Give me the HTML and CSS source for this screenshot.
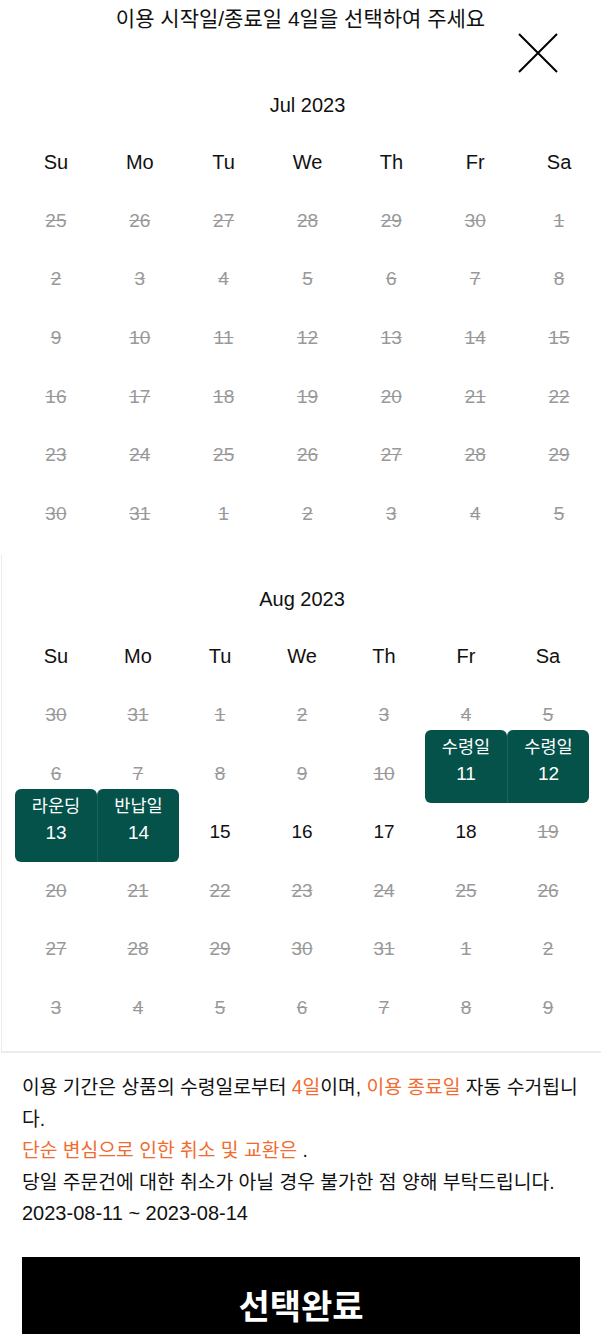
FILE: index.html
```html
<!DOCTYPE html>
<html lang="ko">
<head>
    <meta charset="UTF-8">
    <meta name="viewport" content="width=device-width, initial-scale=1.0">
    <title>이용 기간 선택</title>
    <link rel="stylesheet" href="styles.css">
</head>
<body>
    <div class="header">
        <h1>이용 시작일/종료일 4일을 선택하여 주세요</h1>
        <button class="close" type="button" aria-label="닫기">
            <svg width="40" height="40" viewBox="0 0 40 40">
                <path d="M1 1 L39 39 M39 1 L1 39" stroke="#000" stroke-width="2" fill="none"/>
            </svg>
        </button>
    </div>

    <!-- July -->
    <div class="month jul">
        <div class="month-title">Jul 2023</div>
        <div class="grid">
            <div class="wd">Su</div><div class="wd">Mo</div><div class="wd">Tu</div><div class="wd">We</div><div class="wd">Th</div><div class="wd">Fr</div><div class="wd">Sa</div>

            <div class="day off">25</div><div class="day off">26</div><div class="day off">27</div><div class="day off">28</div><div class="day off">29</div><div class="day off">30</div><div class="day off">1</div>
            <div class="day off">2</div><div class="day off">3</div><div class="day off">4</div><div class="day off">5</div><div class="day off">6</div><div class="day off">7</div><div class="day off">8</div>
            <div class="day off">9</div><div class="day off">10</div><div class="day off">11</div><div class="day off">12</div><div class="day off">13</div><div class="day off">14</div><div class="day off">15</div>
            <div class="day off">16</div><div class="day off">17</div><div class="day off">18</div><div class="day off">19</div><div class="day off">20</div><div class="day off">21</div><div class="day off">22</div>
            <div class="day off">23</div><div class="day off">24</div><div class="day off">25</div><div class="day off">26</div><div class="day off">27</div><div class="day off">28</div><div class="day off">29</div>
            <div class="day off">30</div><div class="day off">31</div><div class="day off">1</div><div class="day off">2</div><div class="day off">3</div><div class="day off">4</div><div class="day off">5</div>
        </div>
    </div>

    <!-- August -->
    <div class="month aug">
        <div class="month-title">Aug 2023</div>
        <div class="grid">
            <div class="wd">Su</div><div class="wd">Mo</div><div class="wd">Tu</div><div class="wd">We</div><div class="wd">Th</div><div class="wd">Fr</div><div class="wd">Sa</div>

            <div class="day off">30</div><div class="day off">31</div><div class="day off">1</div><div class="day off">2</div><div class="day off">3</div><div class="day off">4</div><div class="day off">5</div>
            <div class="day off">6</div><div class="day off">7</div><div class="day off">8</div><div class="day off">9</div><div class="day off">10</div>
            <div class="day sel start"><span class="tag">수령일</span><span class="num">11</span></div>
            <div class="day sel end"><span class="tag">수령일</span><span class="num">12</span></div>
            <div class="day sel start"><span class="tag">라운딩</span><span class="num">13</span></div>
            <div class="day sel end"><span class="tag">반납일</span><span class="num">14</span></div>
            <div class="day">15</div><div class="day">16</div><div class="day">17</div><div class="day">18</div><div class="day off">19</div>
            <div class="day off">20</div><div class="day off">21</div><div class="day off">22</div><div class="day off">23</div><div class="day off">24</div><div class="day off">25</div><div class="day off">26</div>
            <div class="day off">27</div><div class="day off">28</div><div class="day off">29</div><div class="day off">30</div><div class="day off">31</div><div class="day off">1</div><div class="day off">2</div>
            <div class="day off">3</div><div class="day off">4</div><div class="day off">5</div><div class="day off">6</div><div class="day off">7</div><div class="day off">8</div><div class="day off">9</div>
        </div>
    </div>

    <div class="info">
        <p>이용 기간은 상품의 수령일로부터 <span class="hl">4일</span>이며, <span class="hl">이용 종료일</span> 자동 수거됩니다.</p>
        <p><span class="hl">단순 변심으로 인한 취소 및 교환은</span> .</p>
        <p>당일 주문건에 대한 취소가 아닐 경우 불가한 점 양해 부탁드립니다.</p>
        <p class="period">2023-08-11 ~ 2023-08-14</p>
    </div>

    <button type="button" class="submit">선택완료</button>
</body>
</html>
```

FILE: styles.css
```css
body {
    margin: 0;
    width: 601px;
    font-family: "Liberation Sans", "Noto Sans CJK KR", sans-serif;
    color: #111;
    background: #fff;
}

.header {
    position: relative;
    height: 60px;
}

.header h1 {
    margin: 0;
    padding-top: 1px;
    font-size: 21px;
    font-weight: normal;
    line-height: 36px;
    text-align: center;
}

.close {
    position: absolute;
    left: 518px;
    top: 33px;
    width: 40px;
    height: 40px;
    padding: 0;
    border: none;
    background: none;
}

.close svg {
    display: block;
}

.month {
    padding: 33px 0 12px 14px;
}

.month-title {
    font-size: 20px;
    line-height: 24px;
    text-align: center;
    margin-bottom: 16px;
}

.aug {
    margin-left: 1px;
    padding: 32px 12px 14px 13px;
    border-left: 1px solid #ececec;
    border-bottom: 2px solid #ececec;
}

.grid {
    display: grid;
    grid-template-columns: repeat(7, 1fr);
    grid-auto-rows: 58.6px;
}

.wd,
.day {
    display: flex;
    align-items: center;
    justify-content: center;
}

.wd {
    font-size: 20px;
}

.day {
    font-size: 19px;
}

.day.off {
    color: #999;
    text-decoration: line-through;
}

/* selected range */
.day.sel {
    margin-top: -14px;
    flex-direction: column;
    justify-content: flex-end;
    padding-bottom: 17px;
    box-sizing: border-box;
    background: #04524a;
    color: #fff;
    border-radius: 6px 6px 0 0;
}

.day.sel.start {
    border-bottom-left-radius: 6px;
}

.day.sel.end {
    border-bottom-right-radius: 6px;
    border-left: 1px solid #1d6259;
}

.tag {
    font-size: 17.5px;
    line-height: 20px;
    margin-bottom: 5px;
}

.num {
    line-height: 24px;
}

.info {
    padding: 19px 21px 27px 22px;
    font-size: 19.3px;
    line-height: 31.5px;
}

.info p {
    margin: 0;
}

.info .hl {
    color: #f26b2f;
}

.info .period {
    font-size: 20px;
}

.submit {
    display: block;
    width: 558px;
    height: 96px;
    margin: 0 21px 0 22px;
    border: none;
    background: #000;
    color: #fff;
    font-family: "Liberation Sans", "Noto Sans CJK KR", sans-serif;
    font-size: 34px;
    font-weight: bold;
}
```
